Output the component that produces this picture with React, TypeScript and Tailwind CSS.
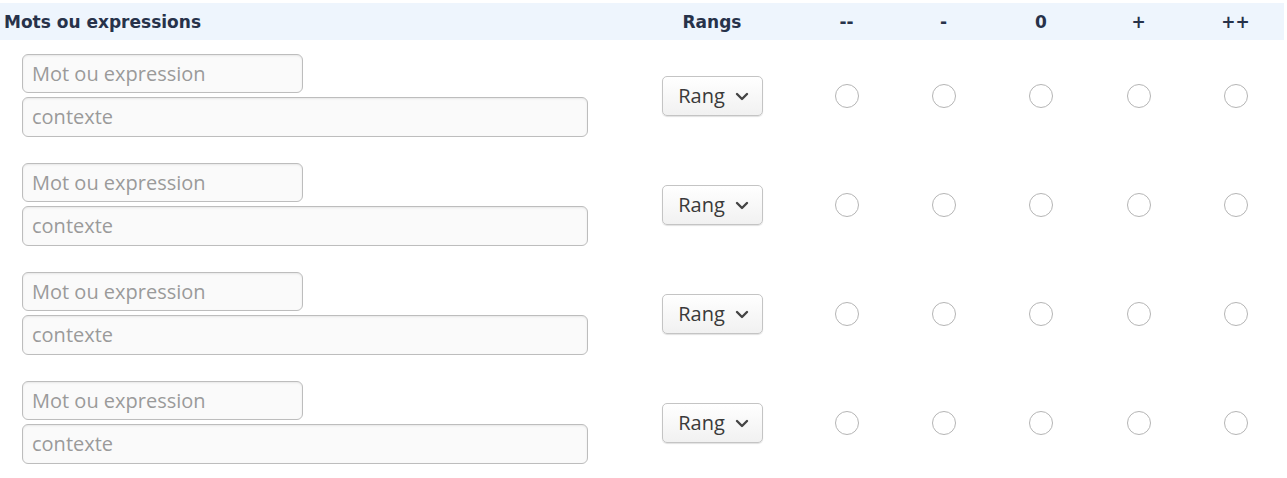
import React from "react";

const cols = ["--", "-", "0", "+", "++"];

function Radio() {
  return (
    <div className="flex justify-center">
      <span className="block h-[24px] w-[24px] rounded-full border-[1.5px] border-[#b5b5b5] bg-white" />
    </div>
  );
}

function Row() {
  return (
    <div className="grid grid-cols-[626px_172px_97px_97px_98px_97px_97px] items-center pt-[14px] pb-[12px]">
      <div className="flex flex-col gap-[4px] pl-[22px]">
        <div className="flex h-[39px] w-[281px] items-center rounded-[6px] border border-[#bdbdbd] bg-[#fafafa] pl-[9px] shadow-[inset_0_1px_2px_rgba(0,0,0,0.08)]">
          <span className="text-[20px] leading-none text-[#9a9a9a]">Mot ou expression</span>
        </div>
        <div className="flex h-[40px] w-[566px] items-center rounded-[6px] border border-[#bdbdbd] bg-[#fafafa] pl-[9px] shadow-[inset_0_1px_2px_rgba(0,0,0,0.08)]">
          <span className="text-[20px] leading-none text-[#9a9a9a]">contexte</span>
        </div>
      </div>
      <div className="flex justify-center pl-[1px]">
        <div className="flex h-[40px] w-[101px] items-center justify-center gap-[10px] rounded-[5px] border border-[#c4c4c4] bg-gradient-to-b from-white to-[#f1f1f1] pl-[2px] shadow-[0_1px_1px_rgba(0,0,0,0.12)]">
          <span className="text-[20px] leading-none text-[#3a3a3a]">Rang</span>
          <svg width="14" height="9" viewBox="0 0 14 9" className="mt-[1px]">
            <path d="M2 2 L7 7 L12 2" fill="none" stroke="#444" strokeWidth="2.4" strokeLinecap="round" strokeLinejoin="round" />
          </svg>
        </div>
      </div>
      {cols.map((c) => (
        <Radio key={c} />
      ))}
    </div>
  );
}

export default function App() {
  return (
    <div className="h-[478px] w-[1287px] bg-white pt-[3px] font-['Open_Sans','Noto_Sans',sans-serif]">
      <div className="grid h-[37px] w-[1284px] grid-cols-[626px_172px_97px_97px_98px_97px_97px] items-center bg-[#eef5fd] pt-[2px] font-['DejaVu_Sans',sans-serif] text-[17px] font-bold text-[#27324a]">
        <div className="pl-[4px]">Mots ou expressions</div>
        <div className="text-center">Rangs</div>
        {cols.map((c) => (
          <div key={c} className="text-center">
            {c}
          </div>
        ))}
      </div>
      <Row />
      <Row />
      <Row />
      <Row />
    </div>
  );
}
